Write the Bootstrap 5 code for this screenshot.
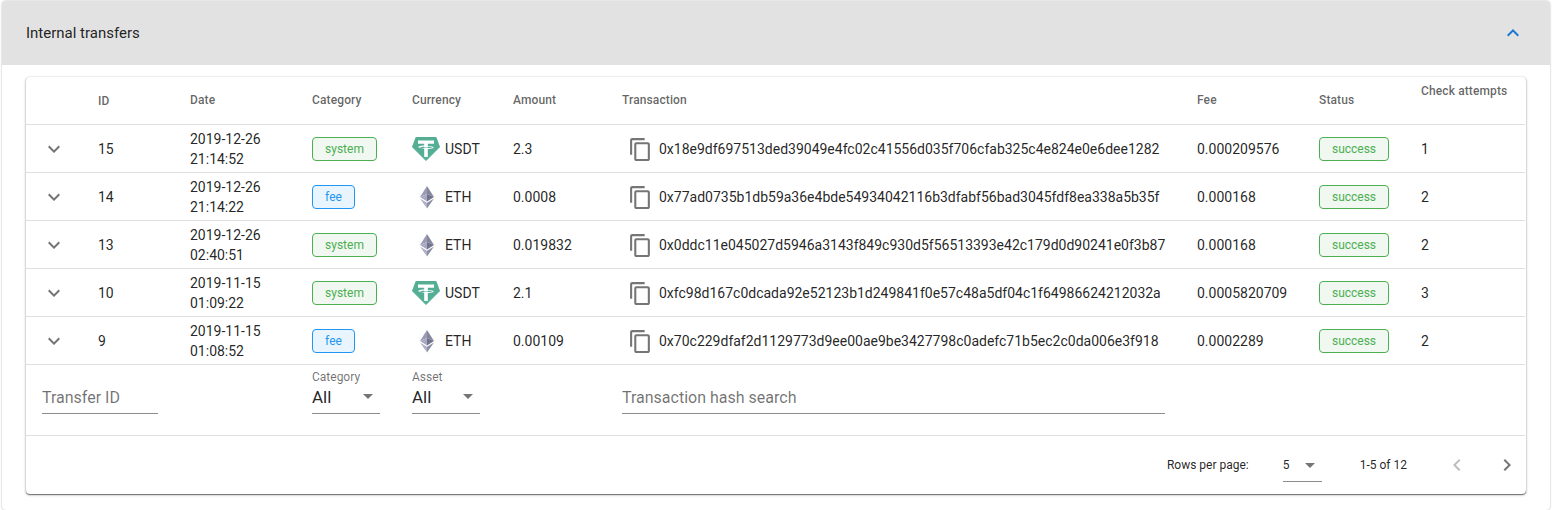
<!DOCTYPE html>
<html lang="en">
<head>
<meta charset="utf-8">
<title>Internal transfers</title>
<link href="https://cdn.jsdelivr.net/npm/bootstrap@5.3.0/dist/css/bootstrap.min.css" rel="stylesheet">
<style>
body{font-family:Roboto,"Liberation Sans",sans-serif;background:#fff;color:rgba(0,0,0,.87);font-size:14px;}
.outer-panel{margin:1px 2px 0 2px;border-radius:4px;box-shadow:0 0 2px rgba(0,0,0,.35);height:509px;background:#fff;overflow:hidden;}
.panel-head{height:64px;background:#e2e2e2;padding:0 25px 0 24px;font-size:15px;color:rgba(0,0,0,.87);}
.panel-body-area{padding:12px 24px 0 24px;}
.paper{border-radius:4px;background:#fff;box-shadow:0 1px 1px rgba(0,0,0,.45),0 1px 3px rgba(0,0,0,.25),0 0 2px rgba(0,0,0,.12);}
.tx-table{table-layout:fixed;width:1499px;margin:0;border-collapse:collapse;--bs-table-bg:transparent;}
.tx-table th,.tx-table td{padding:0;border-bottom:1px solid #e0e0e0;vertical-align:middle;font-weight:400;box-shadow:none;}
.tx-table thead th{height:47px;font-size:12px;font-weight:500;letter-spacing:.01em;color:rgba(0,0,0,.62);padding-bottom:1px;}
.tx-table thead th.th-id{padding-top:2px;padding-bottom:0;}
.tx-table thead th.th-top{vertical-align:top;padding-top:5px;}
.tx-table tbody td{height:48px;font-size:14px;color:rgba(0,0,0,.87);padding-top:2px;}
.c0{width:72px}.c1{width:92px}.c2{width:122px}.c3{width:100px}.c4{width:101px}.c5{width:109px}.c6{width:575px}.c7{width:122px}.c8{width:102px}.c9{width:104px}
.date-cell{line-height:20px;}
.expander{display:block;margin-left:16px;}
.tag{display:inline-block;height:24px;line-height:22px;border-radius:4px;border:1px solid;font-size:12px;text-align:center;vertical-align:middle;}
.tag-green{border-color:#4caf50;color:#4caf50;background:#f1f8f2;}
.tag-blue{border-color:#2196f3;color:#2196f3;background:#e9f5fe;}
.w-system{width:65px}.w-fee{width:43px}.w-success{width:70px}
.coin{display:flex;align-items:center;}
.coin svg{width:28px;height:24px;margin-right:5px;}
.tx-hash{display:flex;align-items:center;padding-left:6px;}
.tx-hash svg{width:25px;height:25px;margin-right:6px;fill:#757575;flex:none;}
.tx-table tbody tr.filter-row td{height:71px;vertical-align:top;border-bottom:1px solid #e0e0e0;padding-top:0;}
.field{position:relative;border-bottom:1px solid #8c8c8c;height:33px;margin-top:16px;font-size:16px;line-height:33px;}
.field-ph{color:rgba(0,0,0,.56);}
.field-sel{color:rgba(0,0,0,.87);font-size:17px;}
.field-lab{position:absolute;top:-11px;left:0;font-size:12px;line-height:14px;color:rgba(0,0,0,.56);}
.caret-down{position:absolute;right:7px;top:13px;width:0;height:0;border-left:5px solid transparent;border-right:5px solid transparent;border-top:5px solid #757575;}
.f-id{width:116px;margin-left:16px;}
.f-sel{width:68px;}
.f-hash{width:543px;}
.pager{height:58px;font-size:12px;color:rgba(0,0,0,.87);padding-right:9px;}
.rows-sel{position:relative;width:39px;height:30px;line-height:26px;border-bottom:1px solid #8c8c8c;margin-left:34px;margin-right:38px;margin-top:4px;}
.rows-sel .caret-down{right:7px;top:11px;}
.pager svg{width:24px;height:24px;flex:none;}
.pg-prev{margin-left:38px;margin-right:26px;fill:rgba(0,0,0,.26);}
.pg-next{fill:rgba(0,0,0,.54);margin-right:-2px;}
</style>
</head>
<body>
<div class="outer-panel">
  <div class="panel-head d-flex align-items-center justify-content-between">
    <span>Internal transfers</span>
    <svg width="24" height="24" viewBox="0 0 24 24" fill="#1976d2"><path d="M12 8l-6 6 1.41 1.41L12 10.83l4.59 4.58L18 14z"/></svg>
  </div>
  <div class="panel-body-area">
    <div class="paper">
      <table class="table tx-table">
        <colgroup><col class="c0"><col class="c1"><col class="c2"><col class="c3"><col class="c4"><col class="c5"><col class="c6"><col class="c7"><col class="c8"><col class="c9"></colgroup>
        <thead><tr><th></th><th class="th-id">ID</th><th>Date</th><th>Category</th><th>Currency</th><th>Amount</th><th>Transaction</th><th>Fee</th><th>Status</th><th class="th-top">Check attempts</th></tr></thead>
        <tbody>
          <tr>
            <td><svg class="expander" width="24" height="24" viewBox="0 0 24 24" fill="#757575"><path d="M16.59 8.59L12 13.17 7.41 8.59 6 10l6 6 6-6z"/></svg></td>
            <td>15</td><td class="date-cell">2019-12-26<br>21:14:52</td><td><span class="tag tag-green w-system">system</span></td>
            <td><div class="coin"><svg viewBox="0 0 28 24"><use href="#usdt"/></svg>USDT</div></td><td>2.3</td>
            <td><div class="tx-hash"><svg viewBox="0 0 24 24"><use href="#copy"/></svg>0x18e9df697513ded39049e4fc02c41556d035f706cfab325c4e824e0e6dee1282</div></td>
            <td>0.000209576</td><td><span class="tag tag-green w-success">success</span></td><td>1</td>
          </tr>
          <tr>
            <td><svg class="expander" width="24" height="24" viewBox="0 0 24 24" fill="#757575"><path d="M16.59 8.59L12 13.17 7.41 8.59 6 10l6 6 6-6z"/></svg></td>
            <td>14</td><td class="date-cell">2019-12-26<br>21:14:22</td><td><span class="tag tag-blue w-fee">fee</span></td>
            <td><div class="coin"><svg viewBox="0 0 28 24"><use href="#eth"/></svg>ETH</div></td><td>0.0008</td>
            <td><div class="tx-hash"><svg viewBox="0 0 24 24"><use href="#copy"/></svg>0x77ad0735b1db59a36e4bde54934042116b3dfabf56bad3045fdf8ea338a5b35f</div></td>
            <td>0.000168</td><td><span class="tag tag-green w-success">success</span></td><td>2</td>
          </tr>
          <tr>
            <td><svg class="expander" width="24" height="24" viewBox="0 0 24 24" fill="#757575"><path d="M16.59 8.59L12 13.17 7.41 8.59 6 10l6 6 6-6z"/></svg></td>
            <td>13</td><td class="date-cell">2019-12-26<br>02:40:51</td><td><span class="tag tag-green w-system">system</span></td>
            <td><div class="coin"><svg viewBox="0 0 28 24"><use href="#eth"/></svg>ETH</div></td><td>0.019832</td>
            <td><div class="tx-hash"><svg viewBox="0 0 24 24"><use href="#copy"/></svg>0x0ddc11e045027d5946a3143f849c930d5f56513393e42c179d0d90241e0f3b87</div></td>
            <td>0.000168</td><td><span class="tag tag-green w-success">success</span></td><td>2</td>
          </tr>
          <tr>
            <td><svg class="expander" width="24" height="24" viewBox="0 0 24 24" fill="#757575"><path d="M16.59 8.59L12 13.17 7.41 8.59 6 10l6 6 6-6z"/></svg></td>
            <td>10</td><td class="date-cell">2019-11-15<br>01:09:22</td><td><span class="tag tag-green w-system">system</span></td>
            <td><div class="coin"><svg viewBox="0 0 28 24"><use href="#usdt"/></svg>USDT</div></td><td>2.1</td>
            <td><div class="tx-hash"><svg viewBox="0 0 24 24"><use href="#copy"/></svg>0xfc98d167c0dcada92e52123b1d249841f0e57c48a5df04c1f64986624212032a</div></td>
            <td>0.0005820709</td><td><span class="tag tag-green w-success">success</span></td><td>3</td>
          </tr>
          <tr>
            <td><svg class="expander" width="24" height="24" viewBox="0 0 24 24" fill="#757575"><path d="M16.59 8.59L12 13.17 7.41 8.59 6 10l6 6 6-6z"/></svg></td>
            <td>9</td><td class="date-cell">2019-11-15<br>01:08:52</td><td><span class="tag tag-blue w-fee">fee</span></td>
            <td><div class="coin"><svg viewBox="0 0 28 24"><use href="#eth"/></svg>ETH</div></td><td>0.00109</td>
            <td><div class="tx-hash"><svg viewBox="0 0 24 24"><use href="#copy"/></svg>0x70c229dfaf2d1129773d9ee00ae9be3427798c0adefc71b5ec2c0da006e3f918</div></td>
            <td>0.0002289</td><td><span class="tag tag-green w-success">success</span></td><td>2</td>
          </tr>
          <tr class="filter-row">
            <td colspan="3"><div class="field f-id field-ph">Transfer ID</div></td>
            <td><div class="field f-sel field-sel"><span class="field-lab">Category</span>All<span class="caret-down"></span></div></td>
            <td colspan="2"><div class="field f-sel field-sel"><span class="field-lab">Asset</span>All<span class="caret-down"></span></div></td>
            <td colspan="4"><div class="field f-hash field-ph">Transaction hash search</div></td>
          </tr>
        </tbody>
      </table>
      <div class="pager d-flex align-items-center justify-content-end">
        <span>Rows per page:</span>
        <div class="rows-sel">5<span class="caret-down"></span></div>
        <span>1-5 of 12</span>
        <svg class="pg-prev" viewBox="0 0 24 24"><path d="M15.41 7.41L14 6l-6 6 6 6 1.41-1.41L10.83 12z"/></svg>
        <svg class="pg-next" viewBox="0 0 24 24"><path d="M10 6L8.59 7.41 13.17 12l-4.58 4.59L10 18l6-6z"/></svg>
      </div>
    </div>
  </div>
</div>
<svg width="0" height="0" class="d-block">
  <defs>
    <g id="copy"><path d="M16 1H4c-1.1 0-2 .9-2 2v14h2V3h12V1zm3 4H8c-1.1 0-2 .9-2 2v14c0 1.1.9 2 2 2h11c1.1 0 2-.9 2-2V7c0-1.1-.9-2-2-2zm0 16H8V7h11v14z"/></g>
    <g id="usdt">
      <path fill="#53ae94" stroke="#53ae94" stroke-linejoin="round" stroke-width="1" d="M4 .5h20l3.500 9.500L14 23.500.5 10z"/>
      <path fill="#fff" d="M6 3.500h16v3.200h-6.200v2.400c2.900.2 6 .7 6 1.500s-3.100 1.300-6 1.500V20h-3.600v-8.400c-2.900-.2-6-.7-6-1.500s3.100-1.300 6-1.500V6.700H6z"/>
      <path fill="#53ae94" d="M15.800 9.800c2 .1 4 .3 4.700.7-.9.400-3.600.6-6.500.6s-5.600-.2-6.500-.6c.7-.4 2.700-.6 4.700-.7v.8h3.600z"/>
    </g>
    <g id="eth">
      <path fill="#9a9bb3" d="M15 1l-7 11 7-3z"/>
      <path fill="#85869f" d="M15 1l7 11-7-3z"/>
      <path fill="#a9aabf" d="M8 12l7-3v7.500z"/>
      <path fill="#71728c" d="M22 12l-7-3v7.500z"/>
      <path fill="#b0b1c3" d="M8 13.500l7 10v-5.700z"/>
      <path fill="#8f90a8" d="M22 13.500l-7 10v-5.700z"/>
    </g>
  </defs>
</svg>
<script src="https://cdn.jsdelivr.net/npm/bootstrap@5.3.0/dist/js/bootstrap.bundle.min.js"></script>
</body>
</html>
